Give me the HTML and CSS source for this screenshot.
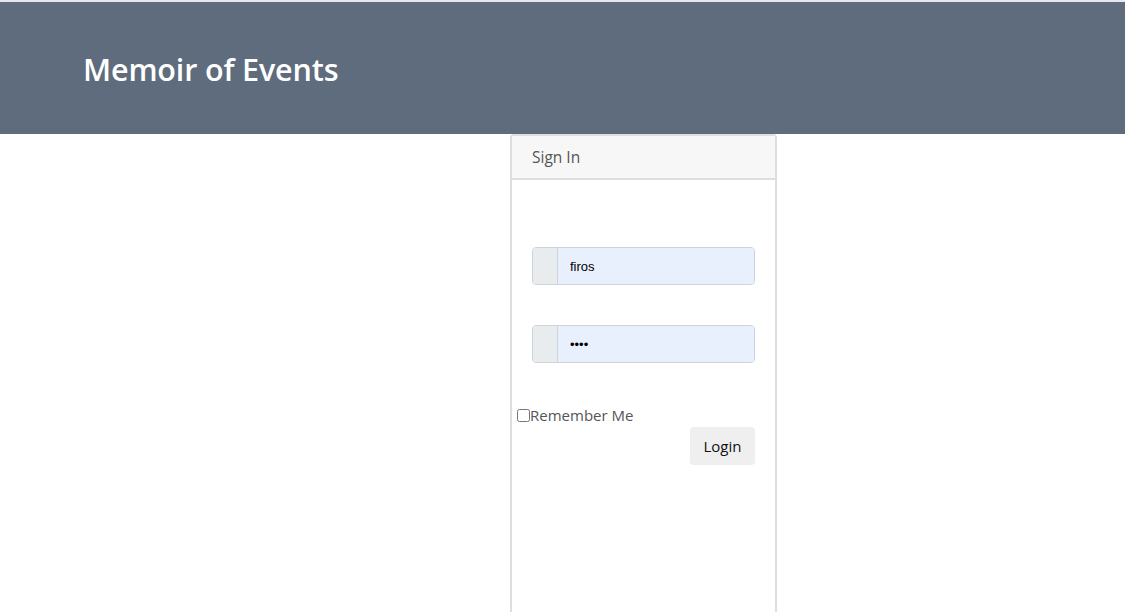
FILE: index.html
```html
<!DOCTYPE html>
<html lang="en">
<head>
<meta charset="utf-8">
<title>Memoir of Events</title>
<link rel="stylesheet" href="styles.css">
</head>
<body>
<header class="topbar">
  <h1 class="brand">Memoir of Events</h1>
</header>
<main class="main">
  <section class="card">
    <div class="card-header">Sign In</div>
    <div class="card-body">
      <div class="input-group">
        <span class="addon"></span>
        <input class="field" type="text" value="firos">
      </div>
      <div class="input-group">
        <span class="addon"></span>
        <input class="field" type="password" value="firo">
      </div>
      <label class="remember"><input type="checkbox" class="check">Remember Me</label>
      <div class="actions">
        <button class="btn" type="button">Login</button>
      </div>
    </div>
  </section>
</main>
</body>
</html>
```
FILE: styles.css
```css
html, body {
  margin: 0;
  padding: 0;
  height: 100%;
  overflow: hidden;
}
body {
  background: #fff;
  font-family: "Open Sans", "Noto Sans", sans-serif;
  display: flex;
  flex-direction: column;
  border-top: 2px solid #e6e8eb;
}
.topbar {
  background: #5e6c7d;
  height: 132px;
  display: flex;
  align-items: center;
  padding-left: 83px;
  flex-shrink: 0;
}
.brand {
  margin: 0;
  color: #fff;
  font-size: 30.5px;
  font-weight: 600;
  letter-spacing: -0.15px;
  position: relative;
  top: 1px;
}
.main {
  flex: 1;
  display: flex;
  justify-content: flex-start;
  padding-left: 510px;
}
.card {
  width: 263px;
  border: 2px solid #dedede;
  border-bottom: none;
  border-radius: 4px 4px 0 0;
  display: flex;
  flex-direction: column;
}
.card-header {
  background: #f7f7f7;
  border-bottom: 2px solid #dedede;
  height: 44px;
  box-sizing: border-box;
  padding: 0 0 0 20px;
  display: flex;
  align-items: center;
  color: #555;
  font-size: 15.5px;
}
.card-body {
  padding: 67px 20px 0 20px;
  display: flex;
  flex-direction: column;
}
.input-group {
  display: flex;
  height: 38px;
  border: 1px solid #cdd3da;
  border-radius: 4px;
  box-sizing: border-box;
  overflow: hidden;
  margin-bottom: 40px;
}
.addon {
  width: 24px;
  background: #e9ecef;
  border-right: 1px solid #cdd3da;
}
.field {
  flex: 1;
  min-width: 0;
  border: none;
  background: #e8f0fe;
  font-family: "Liberation Sans", Arial, sans-serif;
  font-size: 13px;
  padding: 0 12px;
  color: #000;
  outline: none;
}
.remember {
  display: flex;
  align-items: center;
  margin-left: -15px;
  margin-top: 2px;
  color: #555;
  font-size: 15px;
  height: 20px;
}
.check {
  margin: 0;
  width: 13px;
  height: 13px;
}
.actions {
  display: flex;
  justify-content: flex-end;
  margin-top: 2px;
}
.btn {
  background: #efefef;
  border: none;
  border-radius: 4px;
  height: 38px;
  width: 65px;
  font-family: "Open Sans", "Noto Sans", sans-serif;
  font-size: 15px;
  color: #111;
}
```
